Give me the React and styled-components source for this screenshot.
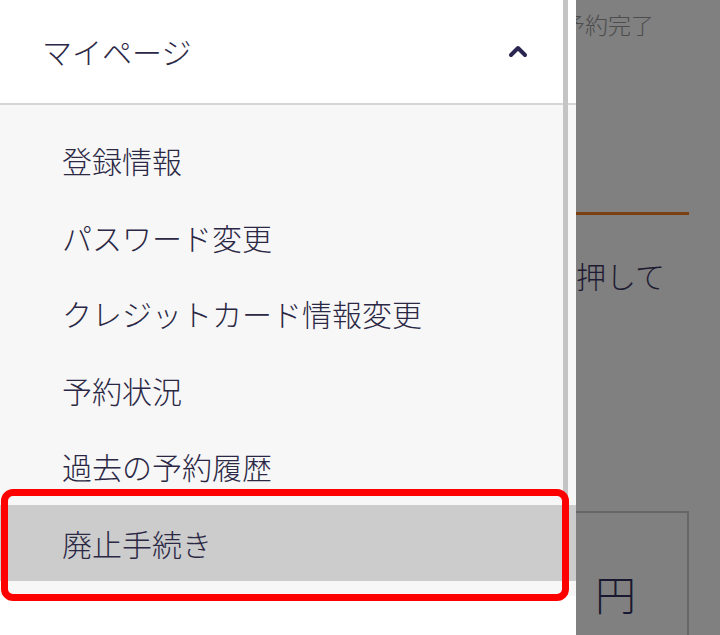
import React from "react";
import styled, { createGlobalStyle } from "styled-components";

const GlobalStyle = createGlobalStyle`
  html, body {
    margin: 0;
    padding: 0;
    height: 100%;
    overflow: hidden;
  }
  body {
    font-family: "Noto Sans CJK JP", "Noto Sans", sans-serif;
  }
`;

/* dimmed page behind the drawer */
const Page = styled.div`
  position: relative;
  width: 720px;
  height: 635px;
  background: #808080;
  overflow: hidden;
`;

const PageColumn = styled.div`
  margin-left: 548px;
  width: 141px;
  display: flex;
  flex-direction: column;
`;

const StepTitle = styled.div`
  margin: 7px 0 0 14px;
  font-size: 23px;
  line-height: 34px;
  font-weight: 300;
  color: #4d4d4d;
  white-space: nowrap;
`;

const Divider = styled.div`
  margin-top: 171px;
  height: 3px;
  background: #7b4113;
`;

const Lead = styled.div`
  margin-top: 40px;
  margin-left: -2px;
  font-size: 30px;
  line-height: 40px;
  font-weight: 300;
  color: #1e1b33;
  white-space: nowrap;
`;

const PriceBox = styled.div`
  margin-top: 216px;
  height: 160px;
  border: 2px solid #666;
  display: flex;
  align-items: flex-start;
  padding: 52px 0 0 45px;
  box-sizing: border-box;
  font-size: 41px;
  line-height: 56px;
  font-weight: 300;
  color: #1a1830;
`;

/* drawer */
const Drawer = styled.nav`
  position: absolute;
  left: 0;
  top: 0;
  width: 576px;
  height: 635px;
  background: #fff;
  display: flex;
  flex-direction: column;
`;

const DrawerHeader = styled.div`
  height: 105px;
  border-bottom: 2px solid #d6d6d6;
  display: flex;
  align-items: center;
  justify-content: space-between;
  padding: 0 48px 2px 42px;
  box-sizing: border-box;
  font-size: 30px;
  font-weight: 300;
  color: #2b2845;
  flex-shrink: 0;
`;

const SubMenu = styled.ul`
  list-style: none;
  margin: 0;
  padding: 17px 0 15px;
  background: #f7f7f7;
`;

const MenuItem = styled.li`
  height: 76.5px;
  display: flex;
  align-items: center;
  padding-left: 62px;
  font-size: 30px;
  font-weight: 300;
  color: #2b2845;
  background: ${(p) => (p.$active ? "#cccccc" : "transparent")};
`;

const ScrollThumb = styled.div`
  position: absolute;
  top: 0;
  right: 8px;
  width: 5px;
  height: 595px;
  background: #c4c4c4;
`;

const Highlight = styled.div`
  position: absolute;
  left: 1px;
  top: 489px;
  width: 568px;
  height: 112px;
  box-sizing: border-box;
  border: 7px solid #ff0000;
  border-radius: 12px;
`;

const ChevronUp = () => (
  <svg width="20" height="14" viewBox="0 0 20 14">
    <polyline
      points="3,11 10,4 17,11"
      fill="none"
      stroke="#2a2550"
      strokeWidth="4"
      strokeLinecap="round"
      strokeLinejoin="round"
    />
  </svg>
);

const items = [
  "登録情報",
  "パスワード変更",
  "クレジットカード情報変更",
  "予約状況",
  "過去の予約履歴",
  "廃止手続き",
];

export default function App() {
  return (
    <>
      <GlobalStyle />
      <Page>
        <PageColumn>
          <StepTitle>予約完了</StepTitle>
          <Divider />
          <Lead>を押して</Lead>
          <PriceBox>円</PriceBox>
        </PageColumn>
        <Drawer>
          <DrawerHeader>
            <span>マイページ</span>
            <ChevronUp />
          </DrawerHeader>
          <SubMenu>
            {items.map((label, i) => (
              <MenuItem key={label} $active={i === items.length - 1}>
                {label}
              </MenuItem>
            ))}
          </SubMenu>
          <ScrollThumb />
          <Highlight />
        </Drawer>
      </Page>
    </>
  );
}
